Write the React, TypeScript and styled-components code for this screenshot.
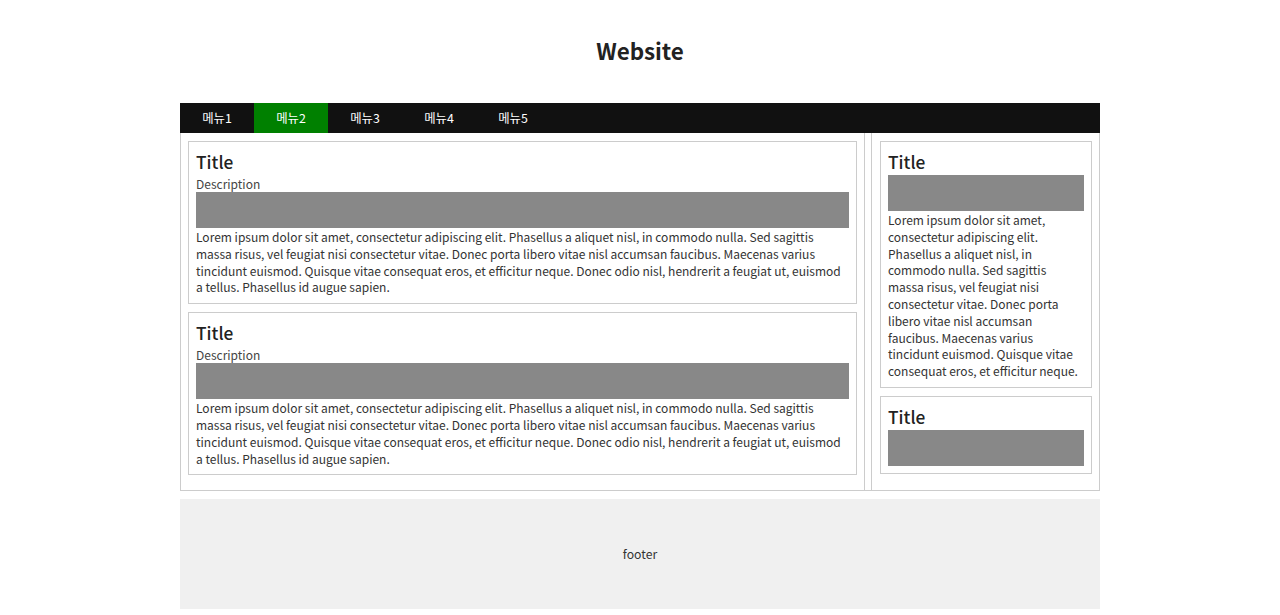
import React from "react";
import styled, { createGlobalStyle, css } from "styled-components";

const GlobalStyle = createGlobalStyle`
  body {
    margin: 8px;
    font-family: "Noto Sans CJK KR", "Noto Sans", sans-serif;
    color: #333;
    background: #fff;
  }
  * {
    box-sizing: border-box;
  }
`;

const lorem =
  "Lorem ipsum dolor sit amet, consectetur adipiscing elit. Phasellus a aliquet nisl, in commodo nulla. Sed sagittis massa risus, vel feugiat nisi consectetur vitae. Donec porta libero vitae nisl accumsan faucibus. Maecenas varius tincidunt euismod. Quisque vitae consequat eros, et efficitur neque. Donec odio nisl, hendrerit a feugiat ut, euismod a tellus. Phasellus id augue sapien.";

const asideLorem =
  "Lorem ipsum dolor sit amet, consectetur adipiscing elit. Phasellus a aliquet nisl, in commodo nulla. Sed sagittis massa risus, vel feugiat nisi consectetur vitae. Donec porta libero vitae nisl accumsan faucibus. Maecenas varius tincidunt euismod. Quisque vitae consequat eros, et efficitur neque.";

const menus = ["메뉴1", "메뉴2", "메뉴3", "메뉴4", "메뉴5"];

const App: React.FC = () => {
  return (
    <>
      <GlobalStyle />
      <Wrapper>
        <Header>
          <SiteTitle>Website</SiteTitle>
        </Header>
        <Nav>
          {menus.map((m, i) => (
            <MenuItem key={m} active={i === 1}>
              {m}
            </MenuItem>
          ))}
        </Nav>
        <Main>
          <Section>
            {[0, 1].map((i) => (
              <Card key={i}>
                <CardTitle>Title</CardTitle>
                <Desc>Description</Desc>
                <ImageBox />
                <Text>{lorem}</Text>
              </Card>
            ))}
          </Section>
          <Aside>
            <Card>
              <CardTitle>Title</CardTitle>
              <ImageBox />
              <Text>{asideLorem}</Text>
            </Card>
            <Card>
              <CardTitle>Title</CardTitle>
              <ImageBox />
            </Card>
          </Aside>
        </Main>
        <Footer>footer</Footer>
      </Wrapper>
    </>
  );
};
export default App;

const Wrapper = styled.div`
  width: 920px;
  margin: 0 auto;
`;

const Header = styled.header`
  height: 95px;
  padding-top: 27px;
  text-align: center;
`;

const SiteTitle = styled.h1`
  margin: 0;
  font-size: 22.4px;
  line-height: 30px;
  font-weight: 600;
  color: #222;
`;

const Nav = styled.nav`
  display: flex;
  height: 30px;
  background: #111;
`;

const MenuItem = styled.div<{ active?: boolean }>`
  width: 74px;
  display: flex;
  align-items: center;
  justify-content: center;
  color: #fff;
  font-size: 12.4px;
  ${(p) =>
    p.active &&
    css`
      background: #008000;
    `}
`;

const Main = styled.div`
  display: flex;
  gap: 6px;
  border: 1px solid #ccc;
  border-top: none;
  margin-bottom: 8px;
`;

const Section = styled.section`
  flex: 1;
  padding: 8px 7px 7px;
  border-right: 1px solid #ccc;
`;

const Aside = styled.aside`
  width: 228px;
  padding: 8px 7px 7px 8px;
  border-left: 1px solid #ccc;
`;

const Card = styled.article`
  border: 1px solid #ccc;
  padding: 7px;
  margin-bottom: 8px;
`;

const CardTitle = styled.h2`
  margin: 0;
  font-size: 17.3px;
  line-height: 26px;
  font-weight: 500;
  color: #222;
`;

const Desc = styled.div`
  font-size: 12px;
  line-height: 17px;
  color: #444;
`;

const ImageBox = styled.div`
  height: 36px;
  background: #888;
`;

const Text = styled.p`
  margin: 0;
  padding-top: 1px;
  font-size: 12px;
  line-height: 16.8px;
  color: #333;
`;

const Footer = styled.footer`
  height: 110px;
  background: #f0f0f0;
  display: flex;
  align-items: center;
  justify-content: center;
  font-size: 12.2px;
  color: #333;
`;
